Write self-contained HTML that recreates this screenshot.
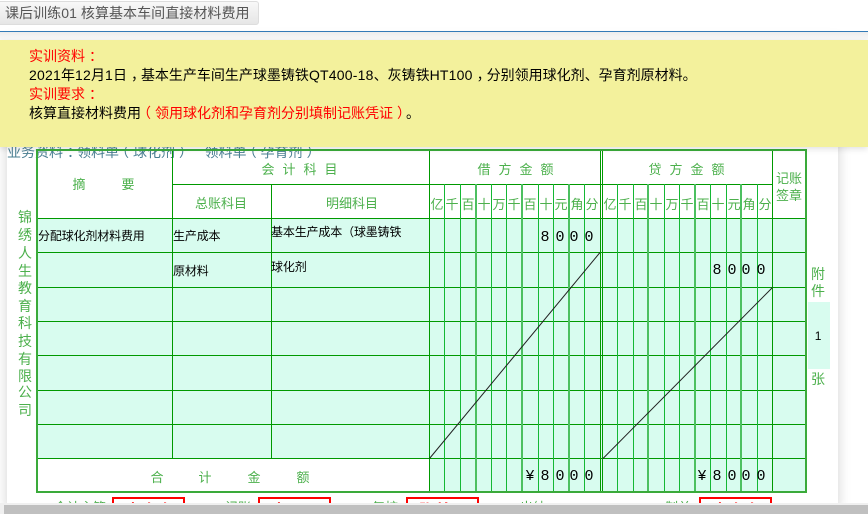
<!DOCTYPE html>
<html lang="zh"><head><meta charset="utf-8"><style>
html,body{margin:0;padding:0;width:868px;height:514px;overflow:hidden;background:#fff}
body{position:relative;font-family:"Liberation Sans","Noto Sans CJK SC",sans-serif;font-size:14px}
.a{position:absolute;white-space:nowrap}
#panel{left:7px;top:40px;width:831px;height:470px;background:#fff;box-shadow:0 0 12px rgba(0,0,0,.18)}
#btn{left:-6px;top:1px;width:263px;height:22px;border:1px solid #ddd;border-radius:3px;background:linear-gradient(#f8f8f8,#e6e6e6);color:#555;line-height:22px;padding-left:0;letter-spacing:.06px}
#btn span{margin-left:10px}
#rule{left:0;top:31px;width:868px;height:1px;background:#337ab7}
#sh{left:0;top:32px;width:868px;height:8px;background:linear-gradient(#ececec,#fafafa)}
#ban{left:0;top:40px;width:868px;height:107px;background:#f3f19c;box-shadow:0 2px 6px rgba(0,0,0,.12);z-index:5}
#ban div{position:absolute;left:29px;line-height:19px;white-space:nowrap;color:#000}
#ban div.r,.r{color:#f00}
.l{letter-spacing:.2px}
.c{position:relative;left:4px}
.o{position:relative;left:-4px}
.p{position:relative;left:6px}
#biz{left:7px;top:143px;color:#4a7f92;line-height:19px}
#sb{left:0;top:503px;width:868px;height:11px;background:#f0f0f0;z-index:6}
#sb i{position:absolute;left:4px;top:2px;right:0;bottom:0;background:#c0c0c0}
svg{position:absolute;left:0;top:0}
svg text{font-family:"Liberation Sans","Noto Sans CJK SC",sans-serif}
.g{fill:#4cb04c;font-size:13px;text-anchor:middle}
.b{font-size:14px}
.k{fill:#000;font-size:12px;letter-spacing:-.15px}
svg .d text{fill:#000;font-size:15px;text-anchor:middle;font-family:"Liberation Mono",monospace}
</style></head><body>
<div class="a" id="panel"></div>
<div class="a" id="btn"><span>课后训练01 核算基本车间直接材料费用</span></div>
<div class="a" id="sh"></div>
<div class="a" id="rule"></div>
<div class="a" id="biz">业务资料<span class="c">：</span>领料单<span class="o">（</span>球化剂<span class="c">）</span>&nbsp;&nbsp;&nbsp;&nbsp;领料单<span class="o">（</span>孕育剂<span class="c">）</span></div>

<svg width="868" height="514" viewBox="0 0 868 514">
<rect x="808" y="302" width="22" height="67" fill="#d8fcef"/>
<rect x="37" y="218" width="770" height="240" fill="#d8fcef"/>
<rect x="429" y="458" width="378" height="34" fill="#d8fcef"/>
<g shape-rendering="crispEdges" fill="none">
<path stroke="#009900" d="M172.5 150V458M271.5 184V458M429.5 150V492M600.5 150V492M602.5 150V492M772.5 150V492M172 184.5H772M37 218.5H807M37 252.5H807M37 287.5H807M37 321.5H807M37 355.5H807M37 390.5H807M37 424.5H807M37 458.5H807"/>
<path stroke="#14b834" d="M444.5 184V492M460.5 184V492M491.5 184V492M506.5 184V492M538.5 184V492M553.5 184V492M584.5 184V492M617.5 184V492M633.5 184V492M664.5 184V492M679.5 184V492M710.5 184V492M726.5 184V492M757.5 184V492"/>
<path stroke="#4cc060" stroke-width="2" d="M476 184V492M522 184V492M569 184V492M648 184V492M695 184V492M741 184V492"/>
<path stroke="#3aaa3a" stroke-width="2" d="M37 149V493M36 150H807M36 492H807M806 149V493"/>
</g>
<path stroke="#222" fill="none" d="M429.5 458.5L600 252.5M603 458.5L772.5 287.5"/>

<g class="g">
<text x="79" y="189">摘</text><text x="128" y="189">要</text>
<text x="268" y="174">会</text><text x="289" y="174">计</text><text x="310" y="174">科</text><text x="331" y="174">目</text>
<text x="484" y="174">借</text><text x="505" y="174">方</text><text x="526" y="174">金</text><text x="547" y="174">额</text>
<text x="655" y="174">贷</text><text x="676" y="174">方</text><text x="697" y="174">金</text><text x="718" y="174">额</text>
<text x="221" y="208">总账科目</text><text x="352" y="208">明细科目</text>
<text x="789" y="183">记账</text><text x="789" y="200">签章</text>
<text x="437" y="209">亿</text><text x="452" y="209">千</text><text x="468" y="209">百</text><text x="484" y="209">十</text><text x="499" y="209">万</text><text x="514" y="209">千</text><text x="530" y="209">百</text><text x="546" y="209">十</text><text x="561" y="209">元</text><text x="577" y="209">角</text><text x="592" y="209">分</text>
<text x="610" y="209">亿</text><text x="625" y="209">千</text><text x="641" y="209">百</text><text x="656" y="209">十</text><text x="672" y="209">万</text><text x="687" y="209">千</text><text x="703" y="209">百</text><text x="718" y="209">十</text><text x="734" y="209">元</text><text x="749" y="209">角</text><text x="765" y="209">分</text>
<text x="157" y="482">合</text><text x="205" y="482">计</text><text x="254" y="482">金</text><text x="303" y="482">额</text>
<g class="b">
<text x="25" y="222">锦</text><text x="25" y="240">绣</text><text x="25" y="258">人</text><text x="25" y="276">生</text><text x="25" y="293">教</text><text x="25" y="311">育</text><text x="25" y="328">科</text><text x="25" y="346">技</text><text x="25" y="364">有</text><text x="25" y="381">限</text><text x="25" y="397">公</text><text x="25" y="415">司</text>
<text x="818" y="279">附</text><text x="818" y="296">件</text><text x="818" y="384">张</text>
</g>
<text x="80" y="512">会计主管</text><text x="238" y="512">记账</text><text x="385" y="512">复核</text><text x="533" y="512">出纳</text><text x="678" y="512">制单</text>
</g>
<g class="k">
<text x="38" y="240">分配球化剂材料费用</text>
<text x="173" y="240">生产成本</text>
<text x="271" y="236">基本生产成本（球墨铸铁</text>
<text x="173" y="275">原材料</text>
<text x="271" y="271">球化剂</text>
<text x="818" y="340" text-anchor="middle">1</text>
</g>
<g class="d">
<text x="545" y="241">8</text><text x="560" y="241">0</text><text x="574" y="241">0</text><text x="589" y="241">0</text>
<text x="717" y="274">8</text><text x="732" y="274">0</text><text x="746" y="274">0</text><text x="761" y="274">0</text>
<text x="530" y="480">¥</text><text x="545" y="480">8</text><text x="560" y="480">0</text><text x="574" y="480">0</text><text x="589" y="480">0</text>
<text x="702" y="480">¥</text><text x="717" y="480">8</text><text x="732" y="480">0</text><text x="746" y="480">0</text><text x="761" y="480">0</text>
</g>
<g fill="none" stroke="#f00" stroke-width="2" shape-rendering="crispEdges">
<rect x="113" y="498" width="71" height="24"/><rect x="259" y="498" width="71" height="24"/><rect x="407" y="498" width="71" height="24"/><rect x="700" y="498" width="71" height="24"/>
</g>
<g fill="#f00" font-size="16" font-weight="bold" text-anchor="middle">
<text x="149" y="516">李小小</text><text x="295" y="516">李丽丽</text><text x="443" y="516">张美丽</text><text x="736" y="516">李小小</text>
</g>
</svg>

<div class="a" id="ban">
<div class="r" style="top:7px">实训资料<span class="c">：</span></div>
<div style="top:26px"><span class="l">2021</span>年<span class="l">12</span>月<span class="l">1</span>日<span class="c">，</span>基本生产车间生产球墨铸铁<span class="l">QT400-18</span>、灰铸铁<span class="l">HT100</span><span class="c">，</span>分别领用球化剂、孕育剂原材料。</div>
<div class="r" style="top:45px">实训要求<span class="c">：</span></div>
<div style="top:64px">核算直接材料费用<span class="r"><span class="o">（</span>领用球化剂和孕育剂分别填制记账凭证<span class="c">）</span></span><span class="p">。</span></div>
</div>
<div class="a" id="sb"><i></i></div>
</body></html>
